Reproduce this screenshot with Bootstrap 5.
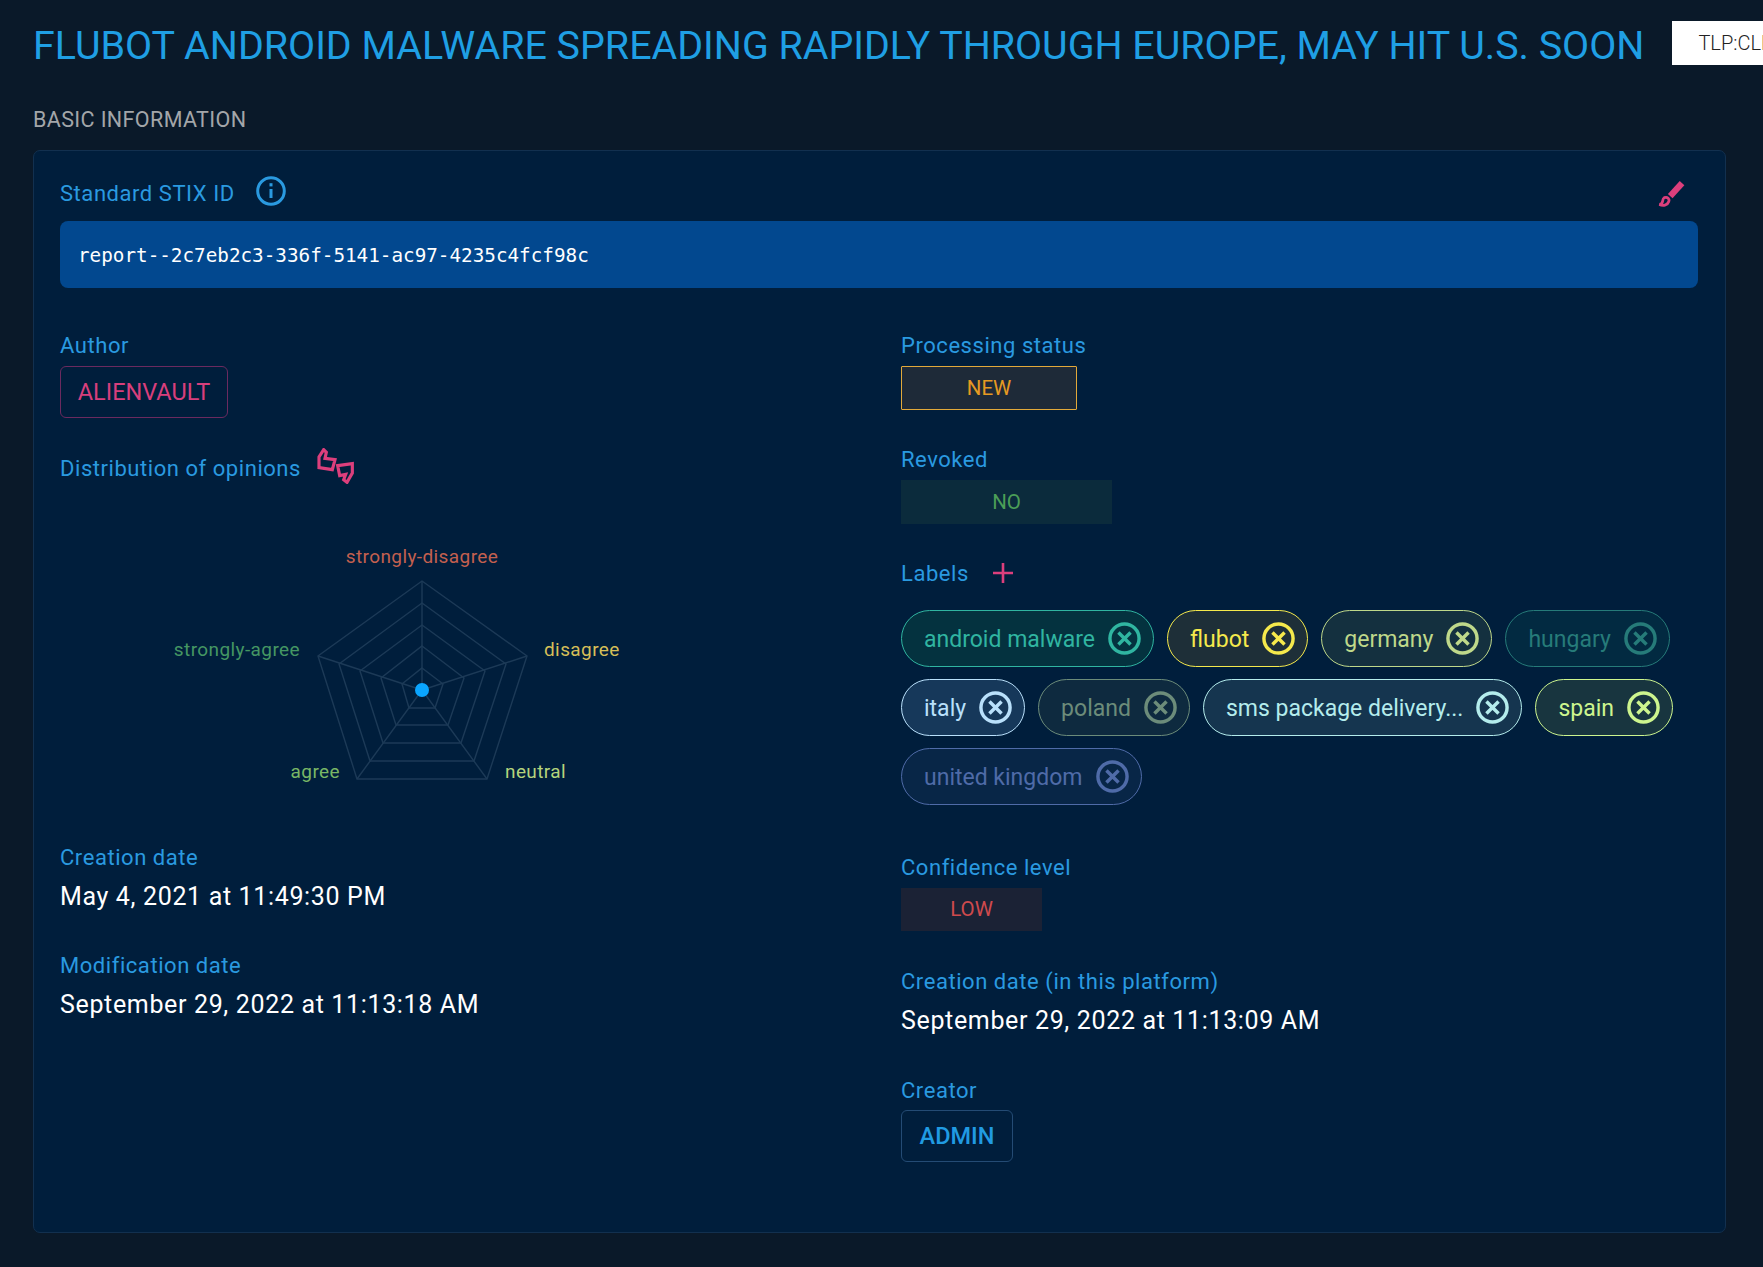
<!DOCTYPE html>
<html lang="en">
<head>
    <meta charset="UTF-8">
    <meta name="viewport" content="width=device-width, initial-scale=1">
    <title>Report overview</title>
    <link href="https://cdn.jsdelivr.net/npm/bootstrap@5.3.3/dist/css/bootstrap.min.css" rel="stylesheet">
    <style>
        html, body { height: 100%; overflow: hidden; }
        body { background: #0a1929; font-family: Roboto, "Noto Sans", sans-serif; color: #fff; }
        .page-wrap { padding: 21px 0 0 33px; width: 1763px; overflow: hidden; }
        .report-title { font-size: 39.4px; line-height: 44px; padding-top: 3px; font-weight: 400; color: #1f9fe4; white-space: nowrap; margin: 0; }
        .tlp-tag { width: 140px; height: 44px; margin-left: 28px; padding-left: 26px; line-height: 44px; font-size: 20px; font-weight: 300; background: #fff; color: #222; white-space: nowrap; flex: none; }
        .section-name { font-size: 21.5px; letter-spacing: .38px; line-height: 26px; color: #a3a6a9; margin: 39px 0 17px; font-weight: 400; text-transform: uppercase; }
        .info-panel { width: 1693px; height: 1083px; background: #001e3c; border: 1px solid #12304f; border-radius: 7px; padding: 25px 27px 0 26px; }
        .info-panel .row { --bs-gutter-x: 44px; }
        .fld-label { font-size: 22px; letter-spacing: .55px; line-height: 24px; padding-top: 1px; margin: 0 0 -1px; color: #2a9ae0; }
        .info-ico { margin: 0 0 3px 5px; }
        .stix-box { height: 67px; line-height: 69px; margin: 12px 0 45px; padding-left: 18px; border-radius: 8px; background: #02488f; font-family: "DejaVu Sans Mono", monospace; font-size: 19.3px; color: #fff; }
        .ico-pink { color: #dc3f7c; }
        .brush-ico { margin-right: 13px; }
        .author-tag, .creator-tag { display: inline-block; height: 52px; line-height: 50px; border-radius: 6px; font-size: 23.5px; margin-top: 9px; }
        .author-tag { width: 168px; text-align: center; color: #d83f7c; border: 1px solid #6b2a5f; }
        .creator-tag { width: 112px; text-align: center; color: #209be2; border: 1px solid #244b74; margin-top: 8px; font-weight: 500; }
        .opinion-head { margin-top: 38px; height: 24px; }
        .opinion-ico { margin-bottom: 4px; }
        .radar { display: block; margin: 50px 0 55px; }
        .radar text { font-size: 19px; letter-spacing: .4px; font-family: Roboto, "Noto Sans", sans-serif; }
        .fld-value { font-size: 25px; letter-spacing: .65px; line-height: 28px; color: #fff; margin: 14px 0 42px; }
        .state-box { height: 44px; line-height: 42px; text-align: center; font-size: 20.5px; }
        .state-new { width: 176px; margin: 9px 0 37px; color: #e69a22; background: #1e2a38; border: 1px solid #e2a93a; border-radius: 1px; }
        .state-no { width: 211px; margin: 9px 0 37px; color: #4b9e57; background: #0b2b3c; line-height: 44px; }
        .state-low { width: 141px; margin: 9px 0 38px; height: 43px; line-height: 43px; color: #cf4a4d; background: #1b2235; }
        .labels-head { gap: 22px; }
        .tag-list { gap: 12px 13px; margin: 25px 0 50px; }
        .tag-chip { height: 57px; border-radius: 29px; border: 1px solid var(--tag); background: var(--tag-bg); color: var(--tag); padding: 0 12px 0 22px; font-size: 23px; gap: 13px; }
        .tag-chip svg { flex: none; }
        .tag-text { padding-top: 4px; }
        .tag-teal { --tag: #30b5a1; --tag-bg: #04323f; }
        .tag-yellow { --tag: #f5e94c; --tag-bg: #1e2f38; }
        .tag-olive { --tag: #bfd88a; --tag-bg: #14303f; }
        .tag-dim-teal { --tag: #267b79; --tag-bg: #022a41; }
        .tag-ice { --tag: #b9e0fb; --tag-bg: #16385a; }
        .tag-dim-green { --tag: #6c8c7a; --tag-bg: #0e2a3f; }
        .tag-aqua { --tag: #b4ecec; --tag-bg: #15354f; }
        .tag-lime { --tag: #cdf58e; --tag-bg: #18353f; }
        .tag-slate { --tag: #4f6ba8; --tag-bg: #082647; }
        .creator-label { margin-top: 43px; }
    </style>
</head>
<body>

<svg width="0" height="0" class="d-block">
    <symbol id="chipClose" viewBox="0 0 24 24">
        <circle cx="12" cy="12" r="10.6" fill="none" stroke="currentColor" stroke-width="2.5"/>
        <path d="M7.6 7.6l8.8 8.8M16.4 7.6l-8.8 8.8" fill="none" stroke="currentColor" stroke-width="2.5"/>
    </symbol>
</svg>

<div class="page-wrap">
    <div class="d-flex align-items-start">
        <h1 class="report-title">FLUBOT ANDROID MALWARE SPREADING RAPIDLY THROUGH EUROPE, MAY HIT U.S. SOON</h1>
        <div class="tlp-tag">TLP:CLEAR</div>
    </div>

    <h2 class="section-name">Basic information</h2>

    <div class="card info-panel">
        <div class="d-flex align-items-center justify-content-between">
            <div class="d-flex align-items-center gap-3">
                <div class="fld-label">Standard STIX ID</div>
                <svg class="info-ico" width="30" height="30" viewBox="0 0 30 30" fill="none" stroke="#2a9ae0" stroke-width="3">
                    <circle cx="15" cy="15" r="13.3"/>
                    <path d="M15 13v9"/>
                    <path d="M15 7.2v3.2"/>
                </svg>
            </div>
            <svg class="ico-pink brush-ico" width="28" height="28" viewBox="50 30 85 90">
                <path d="M90 85l38-42" fill="none" stroke="currentColor" stroke-width="20"/>
                <path d="M55 112c16 0 6-16 16-22c10-4 18 4 14 13c-4 12-18 14-30 9z" fill="none" stroke="currentColor" stroke-width="9"/>
            </svg>
        </div>
        <div class="stix-box">report--2c7eb2c3-336f-5141-ac97-4235c4fcf98c</div>

        <div class="row">
            <div class="col-6">
                <div class="fld-label">Author</div>
                <span class="author-tag">ALIENVAULT</span>

                <div class="d-flex align-items-center gap-3 opinion-head">
                    <div class="fld-label">Distribution of opinions</div>
                    <svg class="ico-pink opinion-ico" width="38" height="36" viewBox="50 53 114 108" fill="none" stroke="currentColor" stroke-width="9.5">
                        <path d="M56 112L56 80L70 58L78 66L74 84L104 88L96 118Z"/>
                        <path d="M112 106L156 100L156 128L140 156L130 148L136 132L118 136Z"/>
                    </svg>
                </div>

                <svg class="radar" width="640" height="260" viewBox="60 530 640 260">
                    <g fill="none" stroke="#1c3a57" stroke-width="1.4">
                        <polygon points="422,581 527,656 487,779 357,779 318,656"/>
                        <polygon points="422,603 506,664 474,761 370,761 339,664"/>
                        <polygon points="422,625 485,671 461,743 383,743 360,671"/>
                        <polygon points="422,646 464,678 448,725 396,725 381,678"/>
                        <polygon points="422,668 443,684 435,708 409,708 402,684"/>
                        <path d="M422 690V581M422 690L527 656M422 690L487 779M422 690L357 779M422 690L318 656"/>
                    </g>
                    <circle cx="422" cy="690" r="7" fill="#0aa5ff"/>
                    <text x="422" y="563" text-anchor="middle" fill="#c4604f">strongly-disagree</text>
                    <text x="300" y="656" text-anchor="end" fill="#459763">strongly-agree</text>
                    <text x="544" y="656" fill="#d6bf58">disagree</text>
                    <text x="505" y="778" fill="#b4d47c">neutral</text>
                    <text x="340" y="778" text-anchor="end" fill="#79b766">agree</text>
                </svg>

                <div class="fld-label">Creation date</div>
                <div class="fld-value">May 4, 2021 at 11:49:30 PM</div>
                <div class="fld-label">Modification date</div>
                <div class="fld-value">September 29, 2022 at 11:13:18 AM</div>
            </div>

            <div class="col-6">
                <div class="fld-label">Processing status</div>
                <div class="state-box state-new">NEW</div>
                <div class="fld-label">Revoked</div>
                <div class="state-box state-no">NO</div>

                <div class="d-flex align-items-center labels-head">
                    <div class="fld-label">Labels</div>
                    <svg class="ico-pink" width="24" height="24" viewBox="0 0 24 24" stroke="currentColor" stroke-width="2.6">
                        <path d="M12 2v20M2 12h20"/>
                    </svg>
                </div>
                <div class="d-flex flex-wrap tag-list">
                    <span class="d-inline-flex align-items-center tag-chip tag-teal"><span class="tag-text">android malware</span><svg width="33" height="33"><use href="#chipClose"/></svg></span>
                    <span class="d-inline-flex align-items-center tag-chip tag-yellow"><span class="tag-text">flubot</span><svg width="33" height="33"><use href="#chipClose"/></svg></span>
                    <span class="d-inline-flex align-items-center tag-chip tag-olive"><span class="tag-text">germany</span><svg width="33" height="33"><use href="#chipClose"/></svg></span>
                    <span class="d-inline-flex align-items-center tag-chip tag-dim-teal"><span class="tag-text">hungary</span><svg width="33" height="33"><use href="#chipClose"/></svg></span>
                    <span class="d-inline-flex align-items-center tag-chip tag-ice"><span class="tag-text">italy</span><svg width="33" height="33"><use href="#chipClose"/></svg></span>
                    <span class="d-inline-flex align-items-center tag-chip tag-dim-green"><span class="tag-text">poland</span><svg width="33" height="33"><use href="#chipClose"/></svg></span>
                    <span class="d-inline-flex align-items-center tag-chip tag-aqua"><span class="tag-text">sms package delivery...</span><svg width="33" height="33"><use href="#chipClose"/></svg></span>
                    <span class="d-inline-flex align-items-center tag-chip tag-lime"><span class="tag-text">spain</span><svg width="33" height="33"><use href="#chipClose"/></svg></span>
                    <span class="d-inline-flex align-items-center tag-chip tag-slate"><span class="tag-text">united kingdom</span><svg width="33" height="33"><use href="#chipClose"/></svg></span>
                </div>

                <div class="fld-label">Confidence level</div>
                <div class="state-box state-low">LOW</div>
                <div class="fld-label">Creation date (in this platform)</div>
                <div class="fld-value mb-0">September 29, 2022 at 11:13:09 AM</div>
                <div class="fld-label creator-label">Creator</div>
                <span class="creator-tag">ADMIN</span>
            </div>
        </div>
    </div>
</div>

<script src="https://cdn.jsdelivr.net/npm/bootstrap@5.3.3/dist/js/bootstrap.bundle.min.js"></script>
</body>
</html>
